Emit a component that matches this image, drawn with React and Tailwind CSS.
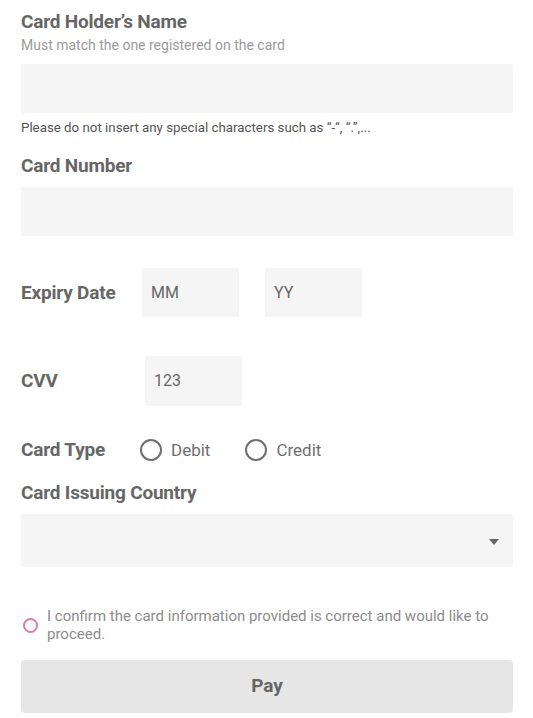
const Label = ({ children, className = '' }) => (
  <div className={`text-[19px] font-bold leading-[24px] tracking-[-0.2px] text-[#666666] ${className}`}>
    {children}
  </div>
);

const Radio = ({ label }) => (
  <label className="flex items-center">
    <span className="h-[22px] w-[22px] rounded-full border-[2px] border-[#6e6e6e]" />
    <span className="ml-[9px] text-[17px] leading-[24px] text-[#6e6e6e]">{label}</span>
  </label>
);

export default function App() {
  return (
    <div className="min-h-screen bg-white pl-[21px] pr-[20px] pt-[10px] font-['Roboto',sans-serif]">
      <Label>Card Holder’s Name</Label>
      <div className="mt-[2px] text-[14px] leading-[18px] text-[#9b9b9b]">
        Must match the one registered on the card
      </div>
      <div className="mt-[10px] h-[49px] w-full rounded-[2px] bg-[#f5f5f5]" />
      <div className="mt-[6px] text-[13.3px] leading-[18px] text-[#555555]">
        Please do not insert any special characters such as “-“, “.”,...
      </div>

      <Label className="mt-[17px]">Card Number</Label>
      <div className="mt-[9px] h-[49px] w-full rounded-[2px] bg-[#f5f5f5]" />

      <div className="mt-[32px] flex items-center">
        <Label className="w-[121px]">Expiry Date</Label>
        <div className="flex h-[49px] w-[97px] items-center bg-[#f5f5f5] px-[9px] text-[16px] text-[#666666]">MM</div>
        <div className="ml-[26px] flex h-[49px] w-[97px] items-center bg-[#f5f5f5] px-[9px] text-[16px] text-[#666666]">YY</div>
      </div>

      <div className="mt-[39px] flex items-center">
        <Label className="w-[124px]">CVV</Label>
        <div className="flex h-[50px] w-[97px] items-center bg-[#f5f5f5] px-[9px] text-[16px] text-[#666666]">123</div>
      </div>

      <div className="mt-[32px] flex items-center">
        <Label className="w-[119px]">Card Type</Label>
        <Radio label="Debit" />
        <div className="ml-[35px]">
          <Radio label="Credit" />
        </div>
      </div>

      <Label className="mt-[19px]">Card Issuing Country</Label>
      <div className="mt-[9px] flex h-[53px] w-full items-center justify-end rounded-[2px] bg-[#f5f5f5] pr-[14px]">
        <svg width="10" height="6" viewBox="0 0 10 6" className="mt-[2px]">
          <path d="M0 0h10L5 6z" fill="#666666" />
        </svg>
      </div>

      <div className="mt-[40px] flex items-start">
        <span className="mt-[11px] ml-[2px] h-[15px] w-[15px] shrink-0 rounded-full border-[2px] border-[#e07aa6]" />
        <p className="ml-[9px] text-[15px] leading-[18px] text-[#8c8c8c]">
          I confirm the card information provided is correct and would like to proceed.
        </p>
      </div>

      <button className="mt-[17px] flex h-[53px] w-full items-center justify-center rounded-[4px] bg-[#e6e6e6] text-[19px] font-bold text-[#666666]">
        Pay
      </button>
    </div>
  );
}
